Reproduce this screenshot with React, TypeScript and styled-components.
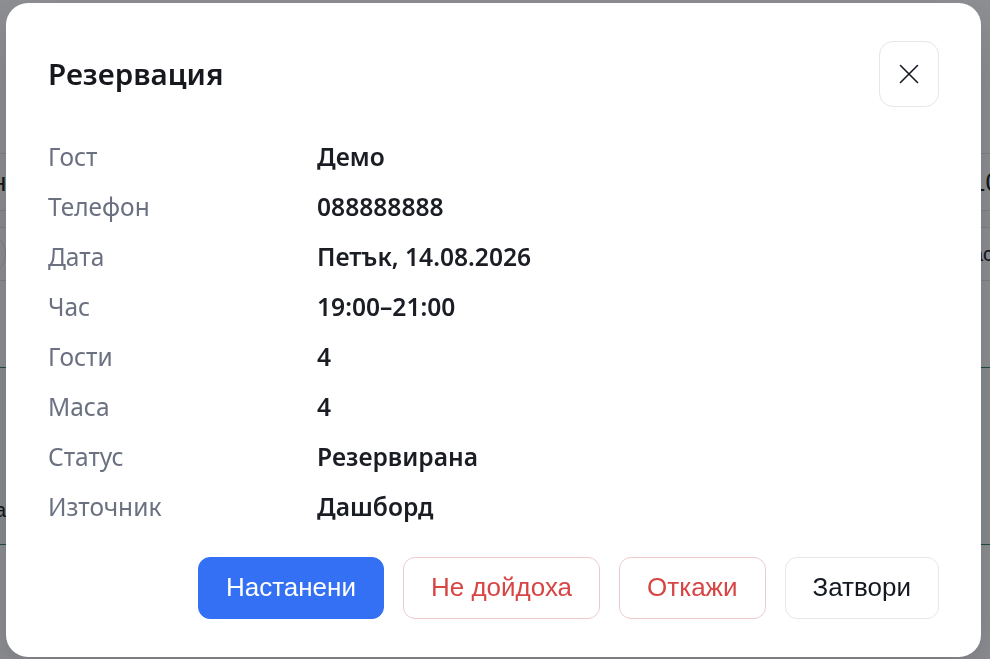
import React from "react";
import styled, { createGlobalStyle } from "styled-components";

const GlobalStyle = createGlobalStyle`
  html, body {
    margin: 0;
    padding: 0;
    height: 100%;
    overflow: hidden;
    background: #ffffff;
    font-family: "Noto Sans", "Open Sans", Arial, sans-serif;
  }
  #root {
    height: 100%;
  }
`;

type Row = { label: string; value: string };

const rows: Row[] = [
  { label: "Гост", value: "Демо" },
  { label: "Телефон", value: "088888888" },
  { label: "Дата", value: "Петък, 14.08.2026" },
  { label: "Час", value: "19:00–21:00" },
  { label: "Гости", value: "4" },
  { label: "Маса", value: "4" },
  { label: "Статус", value: "Резервирана" },
  { label: "Източник", value: "Дашборд" },
];

const App = () => {
  return (
    <>
      <GlobalStyle />
      <Page>
        <PageTop />
        <TableRow $height={56}>
          <Cell $offset={-40}>Ден</Cell>
          <Cell $offset={-10}>10</Cell>
        </TableRow>
        <TableRow $height={16} $shade />
        <TableRow $height={52}>
          <Pill />
          <Cell $small $offset={-3}>Час</Cell>
        </TableRow>
        <Spacer $height={86} />
        <GreenBlock>
          <Cell $small $offset={-43}>Маса</Cell>
        </GreenBlock>
      </Page>

      <Overlay>
        <Dialog role="dialog" aria-labelledby="res-title">
          <Header>
            <Title id="res-title">Резервация</Title>
            <CloseButton aria-label="Затвори">
              <svg width="20" height="20" viewBox="0 0 20 20" fill="none">
                <path
                  d="M1.5 1.5L18.5 18.5M18.5 1.5L1.5 18.5"
                  stroke="#141821"
                  strokeWidth="1.6"
                  strokeLinecap="round"
                />
              </svg>
            </CloseButton>
          </Header>

          <Details>
            {rows.map((r) => (
              <React.Fragment key={r.label}>
                <Label>{r.label}</Label>
                <Value>{r.value}</Value>
              </React.Fragment>
            ))}
          </Details>

          <Actions>
            <ActionButton $variant="primary">Настанени</ActionButton>
            <ActionButton $variant="danger">Не дойдоха</ActionButton>
            <ActionButton $variant="danger">Откажи</ActionButton>
            <ActionButton $variant="plain">Затвори</ActionButton>
          </Actions>
        </Dialog>
      </Overlay>
    </>
  );
};

export default App;

/* page behind the modal */

const Page = styled.div`
  height: 100%;
  display: flex;
  flex-direction: column;
  background: #ffffff;
`;

const PageTop = styled.div`
  height: 153px;
  border-bottom: 1px solid #e3e5e9;
  flex-shrink: 0;
`;

const TableRow = styled.div<{ $height: number; $shade?: boolean }>`
  height: ${(p) => p.$height}px;
  flex-shrink: 0;
  display: flex;
  align-items: center;
  justify-content: space-between;
  border-bottom: 1px solid #e3e5e9;
  background: ${(p) => (p.$shade ? "#fbfbfc" : "transparent")};
`;

const Cell = styled.span<{ $small?: boolean; $offset?: number }>`
  font-family: "Liberation Sans", Arial, sans-serif;
  font-size: ${(p) => (p.$small ? "20px" : "26px")};
  color: #222;
  white-space: nowrap;
  margin: 0 ${(p) => p.$offset ?? 0}px;
`;

const Pill = styled.span`
  width: 40px;
  height: 40px;
  margin-left: -36px;
  border-radius: 50%;
  border: 1px solid #e3e5e9;
`;

const Spacer = styled.div<{ $height: number }>`
  height: ${(p) => p.$height}px;
  flex-shrink: 0;
`;

const GreenBlock = styled.div`
  height: 178px;
  flex-shrink: 0;
  display: flex;
  align-items: flex-end;
  padding-bottom: 22px;
  box-sizing: border-box;
  background: #f4faf6;
  border-top: 1px solid #2f8a5c;
  border-bottom: 1px solid #2f8a5c;
`;

/* modal */

const Overlay = styled.div`
  position: fixed;
  inset: 0;
  background: rgba(6, 8, 17, 0.45);
  display: flex;
  align-items: center;
  justify-content: center;
  padding: 0 9px 0 6px;
`;

const Dialog = styled.div`
  width: 100%;
  box-sizing: border-box;
  background: #ffffff;
  border-radius: 22px;
  padding: 38px 42px 38px 42px;
  display: flex;
  flex-direction: column;
  box-shadow: 0 20px 50px rgba(0, 0, 0, 0.18);
`;

const Header = styled.div`
  display: flex;
  align-items: center;
  justify-content: space-between;
`;

const Title = styled.h2`
  margin: 0;
  font-size: 29.6px;
  font-weight: 600;
  color: #16181d;
`;

const CloseButton = styled.button`
  width: 60px;
  height: 66px;
  border: 1px solid #e4e6eb;
  border-radius: 14px;
  background: #ffffff;
  display: flex;
  align-items: center;
  justify-content: center;
  padding: 0;
  cursor: pointer;
`;

const Details = styled.div`
  margin-top: 25px;
  display: grid;
  grid-template-columns: 269px 1fr;
  grid-auto-rows: 50px;
  align-items: center;
`;

const Label = styled.div`
  font-size: 24.5px;
  color: #6b7180;
`;

const Value = styled.div`
  font-size: 24.6px;
  font-weight: 600;
  color: #1a1d23;
`;

const Actions = styled.div`
  margin-top: 25px;
  display: flex;
  justify-content: flex-end;
  gap: 19px;
`;

const variants = {
  primary: { bg: "#3370f4", border: "#3370f4", color: "#ffffff" },
  danger: { bg: "#ffffff", border: "#efcaca", color: "#d84545" },
  plain: { bg: "#ffffff", border: "#e4e6eb", color: "#141821" },
};

const ActionButton = styled.button<{ $variant: keyof typeof variants }>`
  height: 62px;
  padding: 0 27px;
  border-radius: 12px;
  font-family: "Liberation Sans", Arial, sans-serif;
  font-size: 26px;
  cursor: pointer;
  background: ${(p) => variants[p.$variant].bg};
  border: 1px solid ${(p) => variants[p.$variant].border};
  color: ${(p) => variants[p.$variant].color};
`;
